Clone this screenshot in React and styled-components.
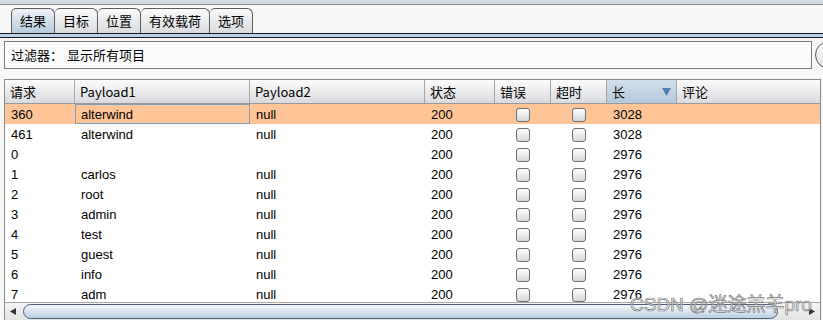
import React from "react";
import styled, { createGlobalStyle } from "styled-components";

const GlobalStyle = createGlobalStyle`
  html, body {
    margin: 0;
    padding: 0;
    background: #f7f7f7;
    overflow: hidden;
  }
  body {
    font-family: "Liberation Sans", "Noto Sans CJK SC", sans-serif;
    font-size: 13px;
    color: #000;
  }
`;

const Page = styled.div`
  width: 823px;
  height: 320px;
  display: flex;
  flex-direction: column;
  position: relative;
  overflow: hidden;
`;

const TopStrip = styled.div`
  height: 4px;
  background: #d7dbe2;
  border-bottom: 1px solid #8c8c8c;
`;

const TabBar = styled.div`
  display: flex;
  margin-top: 3px;
  padding-left: 11px;
  height: 25px;
`;

const Tab = styled.div`
  height: 25px;
  box-sizing: border-box;
  padding: 0 ${p => p.$pad}px;
  display: flex;
  align-items: center;
  border: 1px solid #5c5c5c;
  border-bottom: none;
  border-left: ${p => (p.$first ? "1px solid #5c5c5c" : "none")};
  border-radius: 5px 6px 0 0;
  background: ${p =>
    p.$active
      ? "linear-gradient(#eef2f6, #b7cbdd)"
      : "linear-gradient(#fbfbfb, #dadbde)"};
  font-family: "Noto Sans CJK SC", sans-serif;
  font-size: 13px;
`;

const TabLine = styled.div`
  height: 3px;
  background: #b9d1e8;
  border-top: 1px solid #1c1c1c;
  border-bottom: 1px solid #1c1c1c;
`;

const FilterRow = styled.div`
  display: flex;
  gap: 3px;
  margin: 3px 0 0 4px;
  height: 29px;
`;

const FilterBox = styled.div`
  width: 808px;
  flex: none;
  box-sizing: border-box;
  border: 1px solid #7a7a7a;
  background: #fbfbfb;
  display: flex;
  align-items: center;
  padding-left: 6px;
  font-family: "Noto Sans CJK SC", sans-serif;
  font-size: 13px;
  gap: 4px;
`;

const RoundButton = styled.div`
  width: 28px;
  height: 28px;
  flex: none;
  box-sizing: border-box;
  border: 1px solid #555;
  border-radius: 50%;
  background: linear-gradient(#fdfdfd, #e2e2e2);
`;

const Table = styled.div`
  margin: 10px 2px 0 4px;
  border: 1px solid #8a8a8a;
  border-bottom: none;
  background: #fff;
  display: flex;
  flex-direction: column;
  flex: 1;
`;

const cols = "70px 175px 175px 70px 56px 56px 70px 1fr";

const HeaderRow = styled.div`
  display: grid;
  grid-template-columns: ${cols};
  height: 24px;
  box-sizing: border-box;
  border-bottom: 1px solid #9a9a9a;
`;

const HeadCell = styled.div`
  display: flex;
  align-items: center;
  justify-content: space-between;
  padding: 0 5px;
  border-right: 1px solid #a6a6a6;
  font-family: "Noto Sans CJK SC", "Liberation Sans", sans-serif;
  font-size: 13px;
  background: ${p =>
    p.$sorted
      ? "linear-gradient(#d3e0eb, #b3c9dc)"
      : "linear-gradient(#fbfbfc, #d9dadd)"};

  &:last-child {
    border-right: none;
  }
`;

const Body = styled.div`
  height: 198px;
  overflow: hidden;
`;

const Row = styled.div`
  display: grid;
  grid-template-columns: ${cols};
  height: 20px;
  background: ${p => (p.$selected ? "#ffc596" : "#fff")};
`;

const Cell = styled.div`
  display: flex;
  align-items: center;
  justify-content: ${p => (p.$center ? "center" : "flex-start")};
  padding: 1px 5px 0;
  box-sizing: border-box;
  font-size: 13px;
  white-space: nowrap;
  border: 1px solid ${p => (p.$focus ? "#7d9fbe" : "transparent")};
`;

const Check = styled.span`
  width: 14px;
  height: 14px;
  box-sizing: border-box;
  border: 1px solid #6f6f6f;
  border-radius: 3px;
  background: linear-gradient(#fefefe, #d6d7da);
`;

const ScrollBar = styled.div`
  height: 17px;
  display: flex;
  align-items: center;
  border-top: 1px solid #a8a8a8;
  background: linear-gradient(#f4f4f4, #e4e4e4);
`;

const ArrowBtn = styled.div`
  width: 16px;
  height: 16px;
  flex: none;
  display: flex;
  align-items: center;
  justify-content: center;
`;

const Thumb = styled.div`
  flex: 1;
  height: 15px;
  margin: 0 26px 0 2px;
  box-sizing: border-box;
  border: 1px solid #4d5f7e;
  border-radius: 9px;
  background: linear-gradient(#f3f7fb, #d6e3ef 55%, #b9cfe3);
`;

const Watermark = styled.div`
  position: absolute;
  left: 630px;
  top: 289px;
  font-family: "Liberation Sans", "Noto Sans CJK SC", sans-serif;
  font-size: 19px;
  color: rgba(250, 250, 250, 0.6);
  -webkit-text-stroke: 0.7px #7c7c7c;
  pointer-events: none;
`;

const tabs = [
  { label: "结果", pad: 8, active: true },
  { label: "目标", pad: 8 },
  { label: "位置", pad: 8 },
  { label: "有效载荷", pad: 8 },
  { label: "选项", pad: 8 },
];

const headers = ["请求", "Payload1", "Payload2", "状态", "错误", "超时", "长", "评论"];

const rows = [
  ["360", "alterwind", "null", "200", "3028"],
  ["461", "alterwind", "null", "200", "3028"],
  ["0", "", "", "200", "2976"],
  ["1", "carlos", "null", "200", "2976"],
  ["2", "root", "null", "200", "2976"],
  ["3", "admin", "null", "200", "2976"],
  ["4", "test", "null", "200", "2976"],
  ["5", "guest", "null", "200", "2976"],
  ["6", "info", "null", "200", "2976"],
  ["7", "adm", "null", "200", "2976"],
];

export default function App() {
  return (
    <Page>
      <GlobalStyle />
      <TopStrip />
      <TabBar>
        {tabs.map((t, i) => (
          <Tab key={t.label} $first={i === 0} $active={t.active} $pad={t.pad}>
            {t.label}
          </Tab>
        ))}
      </TabBar>
      <TabLine />
      <FilterRow>
        <FilterBox>
          <span>过滤器：</span>
          <span>显示所有项目</span>
        </FilterBox>
        <RoundButton />
      </FilterRow>
      <Table>
        <HeaderRow>
          {headers.map(h => (
            <HeadCell key={h} $sorted={h === "长"}>
              <span>{h}</span>
              {h === "长" && (
                <svg width="9" height="8" viewBox="0 0 9 8">
                  <path d="M0 0 H9 L4.5 8 Z" fill="#4f7cb1" />
                </svg>
              )}
            </HeadCell>
          ))}
        </HeaderRow>
        <Body>
          {rows.map((r, i) => (
            <Row key={r[0]} $selected={i === 0}>
              <Cell>{r[0]}</Cell>
              <Cell $focus={i === 0}>{r[1]}</Cell>
              <Cell>{r[2]}</Cell>
              <Cell>{r[3]}</Cell>
              <Cell $center>
                <Check />
              </Cell>
              <Cell $center>
                <Check />
              </Cell>
              <Cell>{r[4]}</Cell>
              <Cell />
            </Row>
          ))}
        </Body>
        <ScrollBar>
          <ArrowBtn>
            <svg width="6" height="7" viewBox="0 0 6 7">
              <path d="M6 0 V7 L0 3.5 Z" fill="#333" />
            </svg>
          </ArrowBtn>
          <Thumb />
          <ArrowBtn>
            <svg width="6" height="7" viewBox="0 0 6 7">
              <path d="M0 0 V7 L6 3.5 Z" fill="#333" />
            </svg>
          </ArrowBtn>
        </ScrollBar>
      </Table>
      <Watermark>CSDN @迷途羔羊pro</Watermark>
    </Page>
  );
}
